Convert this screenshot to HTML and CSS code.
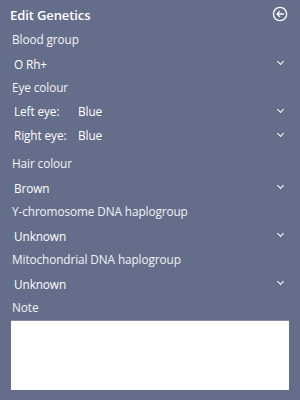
FILE: index.html
```html
<!DOCTYPE html>
<html>
<head>
<meta charset="utf-8">
<link rel="stylesheet" href="styles.css">
</head>
<body>
<div class="panel">
  <div class="header">
    <div class="title">Edit Genetics</div>
    <svg class="back" width="16" height="16" viewBox="0 0 16 16">
      <circle cx="8" cy="8" r="6.6" fill="none" stroke="#fff" stroke-width="1.3"/>
      <path d="M11.3 8H5.2M7.6 5.4L5 8l2.6 2.6" fill="none" stroke="#fff" stroke-width="1.3" stroke-linecap="round" stroke-linejoin="round"/>
    </svg>
  </div>
  <div class="label">Blood group</div>
  <div class="select"><span class="val">O Rh+</span><span class="chev"></span></div>
  <div class="label">Eye colour</div>
  <div class="select sub"><span class="key">Left eye:</span><span class="val">Blue</span><span class="chev"></span></div>
  <div class="select sub"><span class="key">Right eye:</span><span class="val">Blue</span><span class="chev"></span></div>
  <div class="label gap">Hair colour</div>
  <div class="select"><span class="val">Brown</span><span class="chev"></span></div>
  <div class="label">Y-chromosome DNA haplogroup</div>
  <div class="select"><span class="val">Unknown</span><span class="chev"></span></div>
  <div class="label">Mitochondrial DNA haplogroup</div>
  <div class="select"><span class="val">Unknown</span><span class="chev"></span></div>
  <div class="label">Note</div>
  <div class="note"></div>
</div>
</body>
</html>
```
FILE: styles.css
```css
html, body {
  margin: 0;
  padding: 0;
  background: #646e8a;
}
.panel {
  width: 300px;
  height: 400px;
  display: flex;
  flex-direction: column;
  font-family: "Open Sans", "Noto Sans", sans-serif;
  color: #fff;
  font-size: 11.8px;
  letter-spacing: -0.1px;
}
.header {
  height: 28px;
  display: flex;
  align-items: center;
  justify-content: space-between;
  padding: 0 12px 0 10px;
}
.title {
  font-weight: 600;
  font-size: 13px;
  margin-top: 2px;
}
.label {
  height: 23px;
  line-height: 23px;
  padding-left: 12px;
  color: #f2f3f6;
}
.label.gap {
  margin-top: 5px;
}
.select {
  height: 25px;
  display: flex;
  align-items: center;
  padding: 0 17px 0 14px;
}
.select.sub {
  height: 24px;
}
.key {
  width: 64px;
}
.val {
  flex: 1;
}
.chev {
  width: 4px;
  height: 4px;
  border-right: 1.6px solid #fff;
  border-bottom: 1.6px solid #fff;
  transform: rotate(45deg);
  margin-top: -4px;
}
.note {
  margin: 1px 11px 0 11px;
  height: 69px;
  background: #fff;
  border-top: 1px solid #8a90a4;
}
```
